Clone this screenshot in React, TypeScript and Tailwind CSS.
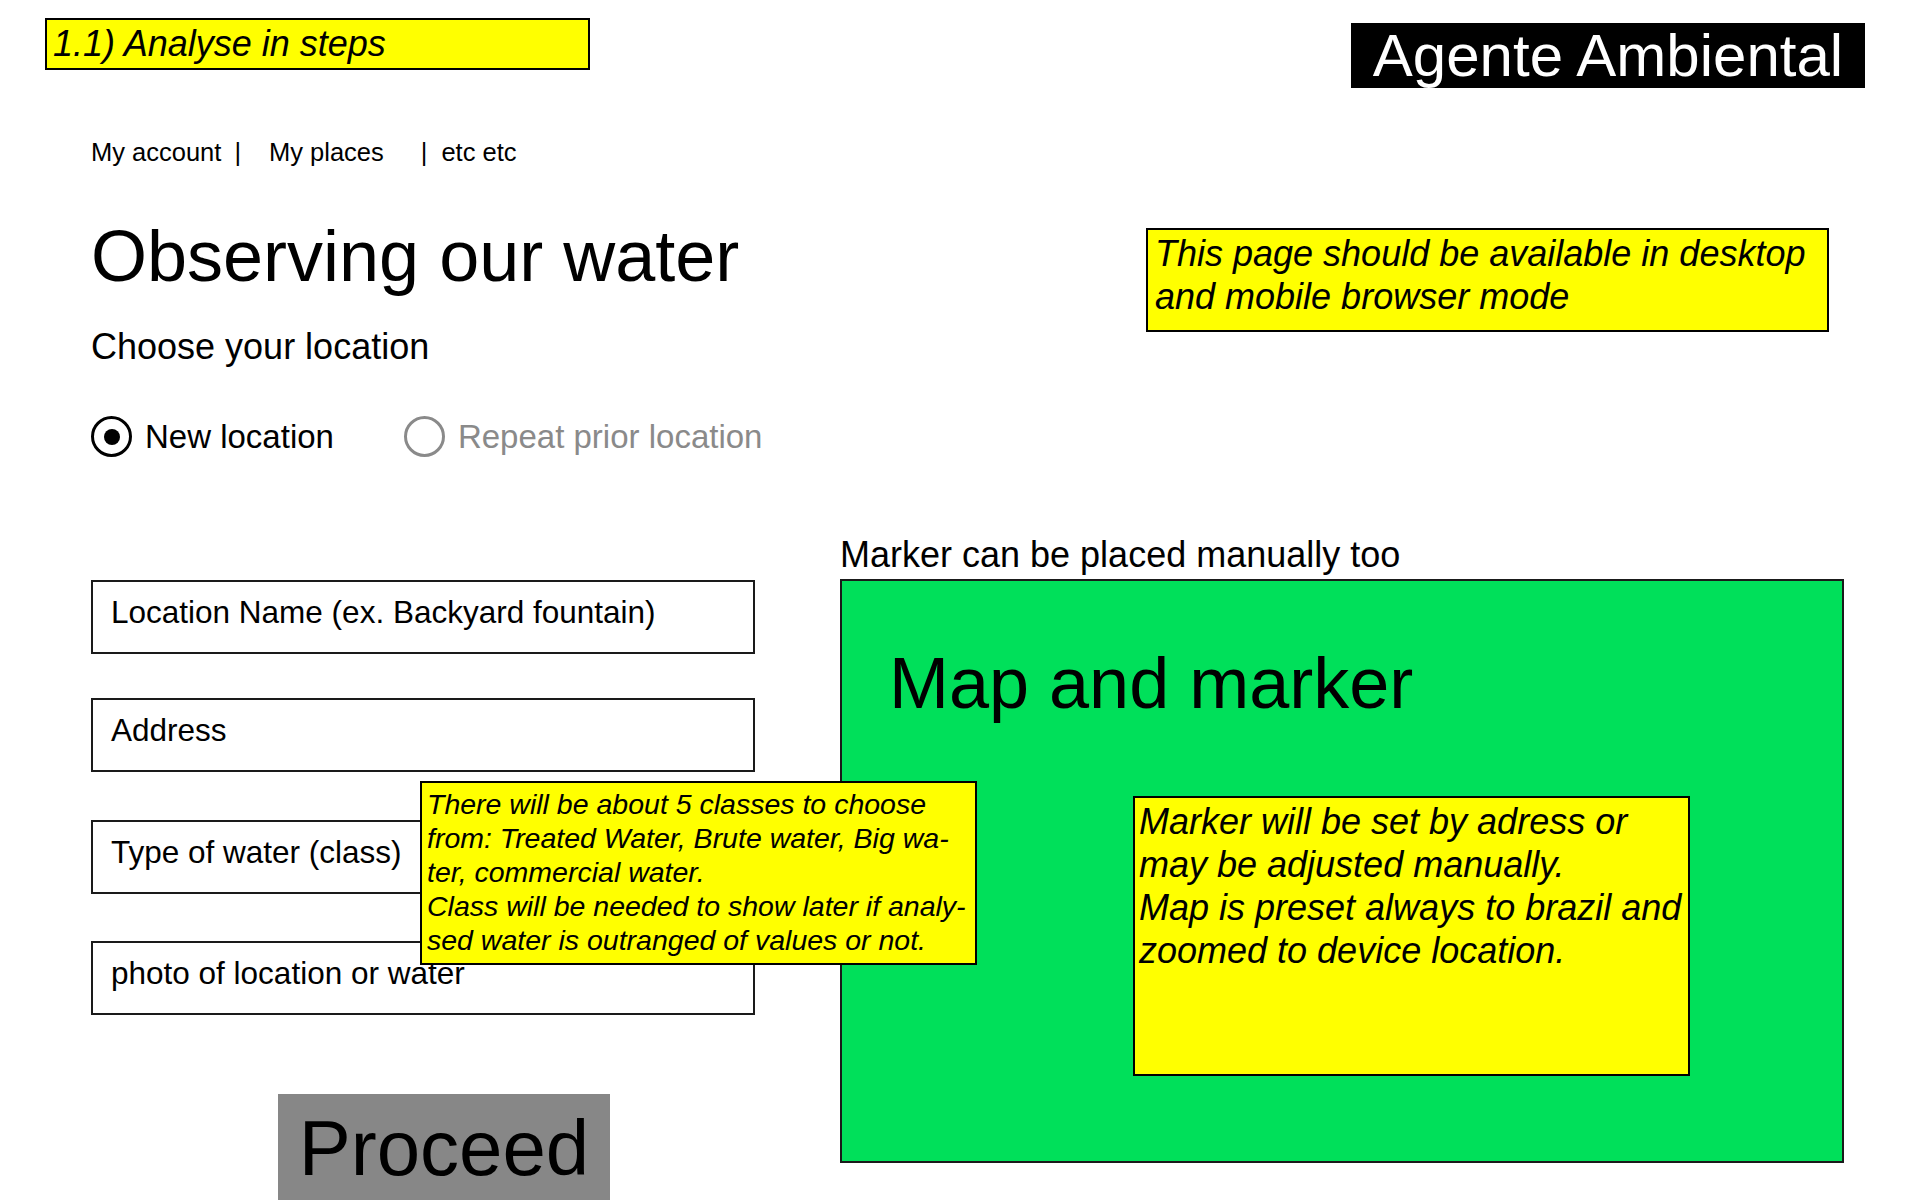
import React from "react";

const FONT = "font-['Liberation_Sans',Arial,sans-serif]";

function Field({ label, className = "" }: { label: string; className?: string }) {
  return (
    <div
      className={`flex h-[74px] w-[664px] items-center border-2 border-[#1a1a1a] bg-white pb-[9px] pl-[18px] text-[31.5px] leading-none text-black ${className}`}
    >
      {label}
    </div>
  );
}

function Radio({ checked, label }: { checked?: boolean; label: string }) {
  return (
    <div className="flex shrink-0 items-center whitespace-nowrap">
      <span
        className={`flex h-[41px] w-[41px] shrink-0 items-center justify-center rounded-full border-[3px] ${
          checked ? "border-black" : "border-[#8a8a8a]"
        }`}
      >
        {checked && <span className="h-[16px] w-[16px] rounded-full bg-black" />}
      </span>
      <span
        className={`ml-[13px] text-[33px] leading-none ${checked ? "text-black" : "text-[#8a8a8a]"}`}
      >
        {label}
      </span>
    </div>
  );
}

export default function App() {
  return (
    <div className={`relative h-[1200px] w-full overflow-hidden bg-white ${FONT}`}>
      {/* Header */}
      <header className="flex items-start justify-between pl-[45px] pr-[55px]">
        <div className="mt-[18px] flex h-[52px] w-[545px] items-center border-2 border-black bg-[#ffff00] pl-[6px] text-[36px] italic leading-none text-black">
          1.1) Analyse in steps
        </div>
        <div className="mt-[23px] flex h-[65px] w-[514px] items-center justify-center bg-black text-[60px] leading-none text-white">
          Agente Ambiental
        </div>
      </header>

      <div className="flex">
        {/* Left column */}
        <div className="ml-[91px] flex w-[664px] shrink-0 flex-col">
          <nav className="mt-[51px] flex h-[28px] items-center whitespace-nowrap text-[25.5px] leading-none text-black">
            <span>My account</span>
            <span className="ml-[13px]">|</span>
            <span className="ml-[28px]">My places</span>
            <span className="ml-[37px]">|</span>
            <span className="ml-[14px]">etc etc</span>
          </nav>

          <h1 className="mt-[53px] whitespace-nowrap text-[72px] leading-none text-black">
            Observing our water
          </h1>

          <p className="mt-[37px] whitespace-nowrap text-[36px] leading-none text-black">Choose your location</p>

          <div className="mt-[51px] flex items-center gap-[70px]">
            <Radio checked label="New location" />
            <Radio label="Repeat prior location" />
          </div>

          <Field label="Location Name (ex. Backyard fountain)" className="mt-[123px]" />
          <Field label="Address" className="mt-[44px]" />
          <Field label="Type of water (class)" className="mt-[48px]" />
          <Field label="photo of location or water" className="mt-[47px]" />

          <button className="ml-[187px] mt-[79px] flex h-[107px] w-[332px] items-center justify-center bg-[#878787] text-[78px] leading-none text-black">
            Proceed
          </button>
        </div>

        {/* Right column */}
        <div className="ml-[85px] flex flex-col">
          <div className="ml-[306px] mt-[140px] h-[104px] w-[683px] whitespace-nowrap border-2 border-black bg-[#ffff00] pl-[7px] pt-[2px] text-[36px] italic leading-[43px] text-black">
            This page should be available in desktop
            <br />
            and mobile browser mode
          </div>

          <p className="mt-[205px] whitespace-nowrap text-[36px] leading-none text-black">
            Marker can be placed manually too
          </p>

          <div className="mt-[6px] flex h-[584px] w-[1004px] flex-col border-2 border-[#1a1a1a] bg-[#00e05a]">
            <h2 className="ml-[47px] mt-[66px] text-[72px] leading-none text-black">Map and marker</h2>
            <div className="ml-[291px] mt-[77px] h-[280px] w-[557px] whitespace-nowrap border-2 border-black bg-[#ffff00] pl-[4px] pt-[2px] text-[36px] italic leading-[43px] text-black">
              Marker will be set by adress or
              <br />
              may be adjusted manually.
              <br />
              Map is preset always to brazil and
              <br />
              zoomed to device location.
            </div>
          </div>
        </div>
      </div>

      {/* Annotation over the class field */}
      <div className="absolute left-[420px] top-[781px] z-10 h-[184px] w-[557px] whitespace-nowrap border-2 border-black bg-[#ffff00] pl-[5px] pt-[4px] text-[28.5px] italic leading-[34px] text-black">
        There will be about 5 classes to choose
        <br />
        from: Treated Water, Brute water, Big wa-
        <br />
        ter, commercial water.
        <br />
        Class will be needed to show later if analy-
        <br />
        sed water is outranged of values or not.
      </div>
    </div>
  );
}
